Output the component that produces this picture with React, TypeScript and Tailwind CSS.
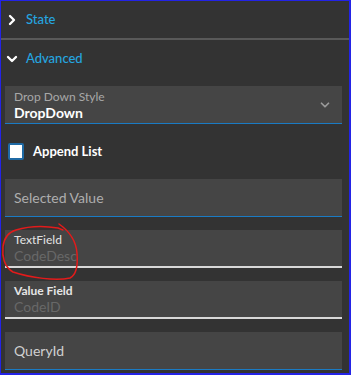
import { ChevronRight, ChevronDown } from "lucide-react"

function LabeledField({ label, value, labelClass, valueClass, borderClass }: { label: string; value: string; labelClass: string; valueClass: string; borderClass: string }) {
  return (
    <div className={`h-[38px] bg-[#454545] pl-[9px] flex flex-col justify-center ${borderClass}`}>
      <div className={`text-[12px] leading-[15px] ${labelClass}`}>{label}</div>
      <div className={`text-[14px] leading-[17px] ${valueClass}`}>{value}</div>
    </div>
  )
}

export default function App() {
  return (
    <div className="relative w-[351px] h-[375px] overflow-hidden bg-[#333333] border-l border-t border-r-2 border-b-2 border-[#2323e6] font-['Lato',sans-serif]">
      {/* State section (collapsed) */}
      <div className="h-[37px] flex items-center pl-[3px] gap-[6px]">
        <ChevronRight className="w-[16px] h-[16px] text-white" strokeWidth={3.5} />
        <span className="text-[13px] font-medium text-[#25a6e0]">State</span>
      </div>
      <div className="h-[2px] bg-[#595959]" />

      {/* Advanced section */}
      <div className="h-[38px] flex items-center pl-[3px] gap-[6px]">
        <ChevronDown className="w-[16px] h-[16px] text-white" strokeWidth={3.5} />
        <span className="text-[13px] font-medium text-[#25a6e0]">Advanced</span>
      </div>

      <div className="pl-[4px] pr-[7px] pt-[8px]">
        {/* Drop down */}
        <div className="h-[38px] bg-[#454545] pl-[9px] pr-[10px] flex items-center border-b border-[#1a7bc4]">
          <div className="flex-1 flex flex-col">
            <span className="text-[12px] leading-[15px] text-[#a8a8a8]">Drop Down Style</span>
            <span className="text-[14px] leading-[17px] font-bold text-white">DropDown</span>
          </div>
          <ChevronDown className="w-[14px] h-[14px] text-[#9a9a9a]" strokeWidth={3} />
        </div>

        {/* Checkbox */}
        <div className="h-[55px] flex items-center gap-[9px] pl-[3px]">
          <div className="w-[16px] h-[17px] bg-white border-2 border-[#1f6aa5] rounded-[2px]" />
          <span className="text-[13px] font-bold text-white">Append List</span>
        </div>

        <div className="flex flex-col gap-[13px]">
          <div className="h-[38px] bg-[#454545] pl-[9px] flex items-center border-b border-[#1a7bc4]">
            <span className="text-[14px] text-[#aeaeae]">Selected Value</span>
          </div>

          <LabeledField
            label="TextField"
            value="CodeDesc"
            labelClass="text-[#dedede] font-medium"
            valueClass="text-[#686868]"
            borderClass="border-b-2 border-[#d8d8d8]"
          />

          <LabeledField
            label="Value Field"
            value="CodeID"
            labelClass="text-[#e6e6e6] font-bold"
            valueClass="text-[#686868]"
            borderClass="border-b-2 border-[#d8d8d8]"
          />

          <div className="h-[38px] bg-[#454545] pl-[9px] flex items-center border-b border-[#1a7bc4]">
            <span className="text-[14px] text-[#d0d0d0]">QueryId</span>
          </div>
        </div>
      </div>

      {/* hand-drawn annotation */}
      <svg className="absolute left-0 top-0 pointer-events-none" width="351" height="375">
        <path
          d="M58 223 C68 230 75 240 76 252 C77 264 75 274 69 277 C55 280 30 277 12 271 C3 266 1 255 2 246 C3 236 8 231 15 229 C28 225 45 225 57 227 L62 229"
          fill="none"
          stroke="#e21b1b"
          strokeWidth="1.5"
          strokeLinecap="round"
        />
      </svg>
    </div>
  )
}
